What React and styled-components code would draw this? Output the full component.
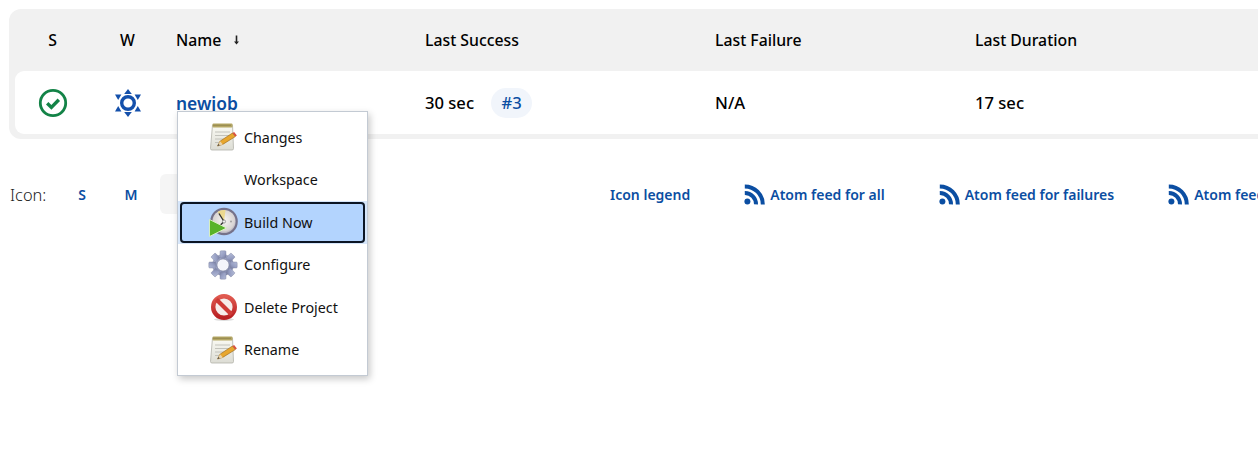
import React from "react";
import styled, { createGlobalStyle } from "styled-components";

const GlobalStyle = createGlobalStyle`
  html, body {
    margin: 0;
    padding: 0;
    width: 1258px;
    height: 452px;
    overflow: hidden;
    background: #fff;
    font-family: "Noto Sans", "Open Sans", Arial, sans-serif;
    color: #000;
  }
`;

const LINK = "#0b4ea2";

const Page = styled.div`
  position: relative;
  width: 1258px;
  height: 452px;
  padding: 9px 0 0 9px;
  box-sizing: border-box;
  overflow: hidden;
`;

const Card = styled.div`
  width: 1290px;
  padding: 0 6px 5px;
  box-sizing: border-box;
  background: #f1f1f1;
  border-radius: 12px;
`;

const columns = "75px 75px 249px 290px 260px 1fr";

const HeaderRow = styled.div`
  display: grid;
  grid-template-columns: ${columns};
  height: 62px;
  align-items: center;
  font-size: 15.8px;
  font-weight: 500;
`;

const JobRow = styled.div`
  display: grid;
  grid-template-columns: ${columns};
  height: 63px;
  align-items: center;
  background: #fff;
  border-radius: 9px;
  font-size: 16.6px;
  font-weight: 500;
`;

const Cell = styled.div`
  display: flex;
  align-items: center;
  justify-content: ${(p) => (p.$center ? "center" : "flex-start")};
  padding-left: ${(p) => (p.$center ? 0 : "11px")};
  gap: ${(p) => p.$gap || 0}px;
`;

const JobLink = styled.a`
  color: ${LINK};
  font-size: 17.4px;
  font-weight: 600;
  text-decoration: none;
`;

const BuildBadge = styled.a`
  display: inline-flex;
  align-items: center;
  justify-content: center;
  width: 41px;
  height: 30px;
  border-radius: 15px;
  background: #f1f5fb;
  color: ${LINK};
  font-size: 16.6px;
  text-decoration: none;
`;

const SortArrow = styled.span`
  display: inline-flex;
  margin-left: 12px;
`;

const Footer = styled.div`
  display: flex;
  align-items: center;
  height: 40px;
  margin-top: 35px;
  margin-left: 1px;
  white-space: nowrap;
`;

const IconLabel = styled.span`
  flex: none;
  width: 52px;
  font-size: 16.4px;
  font-weight: 300;
  color: #222;
`;

const SizeGroup = styled.div`
  display: flex;
  flex: none;
  gap: 9px;
  margin-right: 410px;
`;

const SizeButton = styled.a`
  display: flex;
  align-items: center;
  justify-content: center;
  width: 40px;
  height: 40px;
  border-radius: 6px;
  background: ${(p) => (p.$selected ? "#f5f5f5" : "transparent")};
  color: ${LINK};
  font-size: 14px;
  font-weight: 600;
`;

const FooterLinks = styled.div`
  display: flex;
  flex: none;
  align-items: center;
  gap: 54px;
`;

const FooterLink = styled.a`
  display: flex;
  align-items: center;
  gap: 5px;
  color: ${LINK};
  font-size: 14px;
  font-weight: 600;
  text-decoration: none;
`;

const Menu = styled.ul`
  position: absolute;
  left: 177px;
  top: 111px;
  width: 191px;
  margin: 0;
  padding: 4px 0 4px;
  box-sizing: border-box;
  list-style: none;
  background: #fff;
  border: 1px solid #c3cad3;
  box-shadow: 2px 3px 7px rgba(0, 0, 0, 0.22);
`;

const MenuRow = styled.li`
  height: 42.5px;
  padding: 1px 2px;
  box-sizing: border-box;
  background: ${(p) => (p.$active ? "#d6e6fa" : "transparent")};
`;

const MenuLink = styled.a`
  display: flex;
  align-items: center;
  gap: 6px;
  height: 100%;
  padding-left: 26px;
  box-sizing: border-box;
  border: 2px solid ${(p) => (p.$active ? "#0b1524" : "transparent")};
  border-radius: 4px;
  background: ${(p) => (p.$active ? "#b3d4fe" : "transparent")};
  font-size: 14.3px;
  color: #111;
`;

const MenuIcon = styled.span`
  display: flex;
  align-items: center;
  justify-content: center;
  width: 30px;
  height: 30px;
  flex: none;
`;

const StatusIcon = () => (
  <svg width="30" height="30" viewBox="0 0 30 30">
    <circle cx="15" cy="15" r="12.7" fill="none" stroke="#138347" strokeWidth="2.8" />
    <path d="M9.2 15.2l4.2 4.2 7.4-7.6" fill="none" stroke="#138347" strokeWidth="3.4" />
  </svg>
);

const WeatherIcon = () => (
  <svg width="30" height="30" viewBox="0 0 30 30" fill="#1450ab">
    <circle cx="15" cy="15" r="6.3" fill="none" stroke="#1450ab" strokeWidth="3.4" />
    <path d="M15 1l3.8 5h-7.6z" />
    <path d="M15 29l3.8-5h-7.6z" />
    <path d="M2 6.5h6.4l-3.2 5.4z" />
    <path d="M28 6.5h-6.4l3.2 5.4z" />
    <path d="M2 23.5h6.4l-3.2-5.4z" />
    <path d="M28 23.5h-6.4l3.2-5.4z" />
  </svg>
);

const DownArrow = () => (
  <svg width="7" height="10" viewBox="0 0 7 10">
    <path d="M3.5 0.5v7" fill="none" stroke="#222" strokeWidth="1.6" />
    <path d="M1 6.4h5L3.5 9.6z" fill="#222" />
  </svg>
);

const FeedIcon = () => (
  <svg width="21" height="21" viewBox="0 0 21 21" fill="none" stroke={LINK} strokeWidth="4">
    <circle cx="3.4" cy="17.6" r="3" fill={LINK} stroke="none" />
    <path d="M0.8 9a11 11 0 0 1 11.2 11.4" />
    <path d="M0.8 2.4a18 18 0 0 1 18 18" />
  </svg>
);

const NotepadIcon = () => (
  <svg width="30" height="30" viewBox="0 0 30 30">
    <defs>
      <linearGradient id="pad" x1="0" y1="0" x2="0" y2="1">
        <stop offset="0" stopColor="#fbfbf4" />
        <stop offset="1" stopColor="#dcdcd4" />
      </linearGradient>
    </defs>
    <path d="M4.5 3h20l1 23.5q0 1.5-1.5 1.5H4q-1.5 0-1.5-1.5z" fill="url(#pad)" stroke="#b3b3aa" strokeWidth="0.8" />
    <rect x="4.5" y="1.5" width="20" height="4" rx="1" fill="#b5a765" />
    <path d="M5.5 3.2h18" stroke="#6f6535" strokeWidth="1.1" strokeDasharray="1 1" />
    <path d="M7 10h15M7 13.5h15M7 17h10M7 20.5h6" stroke="#c2c2bb" strokeWidth="1" />
    <path d="M9.5 24l2.6-4.8L24.5 11l2.8 3.6-12.6 7.8z" fill="#e8a72e" stroke="#a26f1c" strokeWidth="0.7" />
    <path d="M24.5 11l1.6-1 2.8 3.6-1.6 1z" fill="#d9503f" />
    <path d="M9.5 24l2.6-4.8 2.8 3.2z" fill="#e9d3ab" />
    <path d="M9.5 24l1-2 1.2 1.2z" fill="#333" />
  </svg>
);

const BuildIcon = () => (
  <svg width="30" height="30" viewBox="0 0 30 30">
    <defs>
      <radialGradient id="dial" cx="0.5" cy="0.45" r="0.6">
        <stop offset="0" stopColor="#f8f6f2" />
        <stop offset="0.75" stopColor="#d8d4d4" />
        <stop offset="1" stopColor="#9c99ad" />
      </radialGradient>
    </defs>
    <circle cx="16" cy="14.5" r="13.8" fill="#75728a" />
    <circle cx="16" cy="14.5" r="11.6" fill="url(#dial)" />
    <path d="M16 14.5L9.5 5a11.5 11.5 0 0 1 8-1.9z" fill="#ecd98f" />
    <path d="M16 14.5L11 6.5M16 14.5l-5 5" stroke="#333" strokeWidth="1.4" fill="none" />
    <circle cx="16" cy="14.5" r="1.6" fill="#eee" stroke="#555" strokeWidth="0.5" />
    <circle cx="23" cy="14.5" r="0.9" fill="#999" />
    <path d="M1.5 12.5L18.5 21 1.5 29.5z" fill="#58b32a" stroke="#dff3c8" strokeWidth="0.9" />
  </svg>
);

const GearIcon = () => (
  <svg width="32" height="30" viewBox="0 0 30 30">
    <defs>
      <linearGradient id="gear" x1="0" y1="0" x2="1" y2="1">
        <stop offset="0" stopColor="#b4bcd8" />
        <stop offset="0.6" stopColor="#969ec2" />
        <stop offset="1" stopColor="#777d9f" />
      </linearGradient>
    </defs>
    <g fill="url(#gear)" stroke="#7a7f9c" strokeWidth="0.4">
      <circle cx="15" cy="15" r="10.5" />
      {[0, 45, 90, 135, 180, 225, 270, 315].map((deg) => (
        <rect key={deg} x="12" y="0.8" width="6" height="7" rx="1" transform={`rotate(${deg} 15 15)`} />
      ))}
    </g>
    <circle cx="15" cy="15" r="6.2" fill="#f4f5fb" stroke="#6f7594" strokeWidth="0.8" />
  </svg>
);

const DeleteIcon = () => (
  <svg width="30" height="30" viewBox="0 0 30 30">
    <defs>
      <linearGradient id="noEntry" x1="0" y1="0" x2="0" y2="1">
        <stop offset="0" stopColor="#e05a50" />
        <stop offset="1" stopColor="#b81f22" />
      </linearGradient>
    </defs>
    <ellipse cx="16" cy="27.5" rx="10" ry="1.4" fill="#ddd" />
    <circle cx="16" cy="15" r="10.8" fill="#f6ecea" stroke="url(#noEntry)" strokeWidth="4.4" />
    <path d="M8.4 7.4l15.2 15.2" stroke="#cf3a36" strokeWidth="4.2" />
  </svg>
);

const menuItems = [
  { label: "Changes", Icon: NotepadIcon },
  { label: "Workspace" },
  { label: "Build Now", Icon: BuildIcon, active: true },
  { label: "Configure", Icon: GearIcon },
  { label: "Delete Project", Icon: DeleteIcon },
  { label: "Rename", Icon: NotepadIcon },
];

const feeds = ["Atom feed for all", "Atom feed for failures", "Atom feed for just latest builds"];

export default function App() {
  return (
    <Page>
      <GlobalStyle />
      <Card>
        <HeaderRow>
          <Cell $center>S</Cell>
          <Cell $center>W</Cell>
          <Cell>
            Name
            <SortArrow>
              <DownArrow />
            </SortArrow>
          </Cell>
          <Cell>Last Success</Cell>
          <Cell>Last Failure</Cell>
          <Cell>Last Duration</Cell>
        </HeaderRow>
        <JobRow>
          <Cell $center>
            <StatusIcon />
          </Cell>
          <Cell $center>
            <WeatherIcon />
          </Cell>
          <Cell>
            <JobLink>newjob</JobLink>
          </Cell>
          <Cell $gap={17}>
            30 sec
            <BuildBadge>#3</BuildBadge>
          </Cell>
          <Cell>N/A</Cell>
          <Cell>17 sec</Cell>
        </JobRow>
      </Card>
      <Footer>
        <IconLabel>Icon:</IconLabel>
        <SizeGroup>
          <SizeButton>S</SizeButton>
          <SizeButton>M</SizeButton>
          <SizeButton $selected>L</SizeButton>
        </SizeGroup>
        <FooterLinks>
          <FooterLink>Icon legend</FooterLink>
          {feeds.map((feed) => (
            <FooterLink key={feed}>
              <FeedIcon />
              {feed}
            </FooterLink>
          ))}
        </FooterLinks>
      </Footer>
      <Menu>
        {menuItems.map(({ label, Icon, active }) => (
          <MenuRow key={label} $active={active}>
            <MenuLink $active={active}>
              <MenuIcon>{Icon && <Icon />}</MenuIcon>
              {label}
            </MenuLink>
          </MenuRow>
        ))}
      </Menu>
    </Page>
  );
}
